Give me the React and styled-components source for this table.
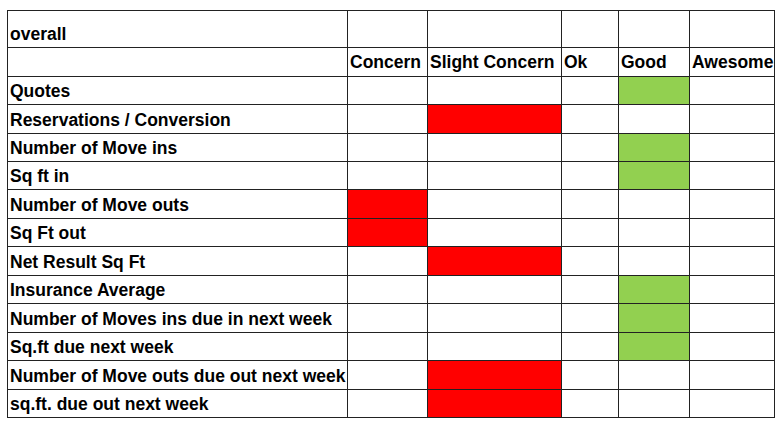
import React from "react";
import styled, { createGlobalStyle } from "styled-components";

const Global = createGlobalStyle`
  html, body { margin: 0; padding: 0; background: #ffffff; }
  body { font-family: "Liberation Sans", Arial, sans-serif; }
`;

const ROW_HEIGHTS = [37, 29, 28, 29, 28, 28, 29, 28, 29, 28, 29, 28, 29, 28];

const Sheet = styled.div`
  display: grid;
  grid-template-columns: 340px 80px 134px 57px 71px 85px;
  grid-template-rows: ${ROW_HEIGHTS.map((h) => h + "px").join(" ")};
  margin: 10px 0 0 7px;
  width: max-content;
  border-top: 1px solid #222;
  border-left: 1px solid #222;
`;

const Cell = styled.div`
  box-sizing: border-box;
  display: flex;
  align-items: flex-end;
  padding: 0 0 ${(p) => (p.$header ? 4 : 3)}px 2px;
  border-right: 1px solid #222;
  border-bottom: 1px solid #222;
  background: ${(p) =>
    p.$fill === "red" ? "#ff0000" : p.$fill === "green" ? "#92d050" : "#ffffff"};
  font-family: "Liberation Sans", Arial, sans-serif;
  font-weight: bold;
  font-size: 17.5px;
  line-height: 20px;
  color: #000;
  white-space: nowrap;
  overflow: visible;
`;

const HEADERS = ["Concern", "Slight Concern", "Ok", "Good", "Awesome"];

const ROWS = [
  ["Quotes", 3],
  ["Reservations / Conversion", 1],
  ["Number of Move ins", 3],
  ["Sq ft in", 3],
  ["Number of Move outs", 0],
  ["Sq Ft out", 0],
  ["Net Result Sq Ft", 1],
  ["Insurance Average", 3],
  ["Number of Moves ins due in next week", 3],
  ["Sq.ft due next week", 3],
  ["Number of Move outs due out next week", 1],
  ["sq.ft. due out next week", 1],
];

const fillFor = (col) => (col <= 1 ? "red" : "green");

export default function App() {
  return (
    <>
      <Global />
      <Sheet>
        <Cell>overall</Cell>
        {HEADERS.map((h) => (
          <Cell key={"e" + h} />
        ))}
        <Cell $header />
        {HEADERS.map((h) => (
          <Cell key={h} $header>
            {h}
          </Cell>
        ))}
        {ROWS.map(([label, col]) => (
          <React.Fragment key={label}>
            <Cell>{label}</Cell>
            {HEADERS.map((h, i) => (
              <Cell key={h} $fill={i === col ? fillFor(col) : undefined} />
            ))}
          </React.Fragment>
        ))}
      </Sheet>
    </>
  );
}
